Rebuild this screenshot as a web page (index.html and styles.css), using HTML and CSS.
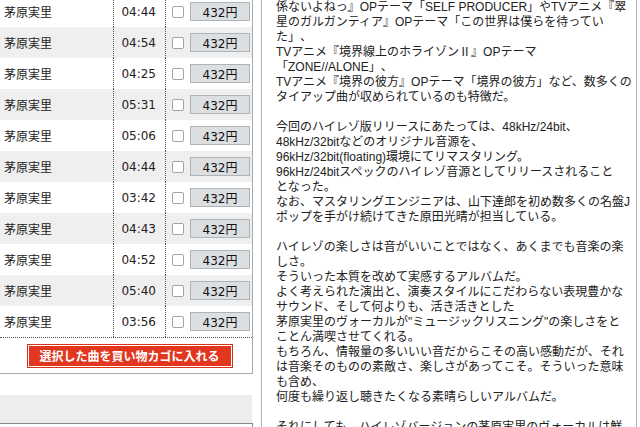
FILE: index.html
```html
<!DOCTYPE html>
<html lang="ja">
<head>
  <meta charset="UTF-8">
  <title>茅原実里 ハイレゾ</title>
  <meta name="viewport" content="width=device-width, initial-scale=1.0">
  <link rel="stylesheet" href="styles.css">
</head>
<body>
  <div class="page">
    <div class="side">
      <div class="tracks">
        <div class="row"><div class="name">茅原実里</div><div class="time">04:44</div><div class="buy"><input type="checkbox"><button class="price">432円</button></div></div>
        <div class="row"><div class="name">茅原実里</div><div class="time">04:54</div><div class="buy"><input type="checkbox"><button class="price">432円</button></div></div>
        <div class="row"><div class="name">茅原実里</div><div class="time">04:25</div><div class="buy"><input type="checkbox"><button class="price">432円</button></div></div>
        <div class="row"><div class="name">茅原実里</div><div class="time">05:31</div><div class="buy"><input type="checkbox"><button class="price">432円</button></div></div>
        <div class="row"><div class="name">茅原実里</div><div class="time">05:06</div><div class="buy"><input type="checkbox"><button class="price">432円</button></div></div>
        <div class="row"><div class="name">茅原実里</div><div class="time">04:44</div><div class="buy"><input type="checkbox"><button class="price">432円</button></div></div>
        <div class="row"><div class="name">茅原実里</div><div class="time">03:42</div><div class="buy"><input type="checkbox"><button class="price">432円</button></div></div>
        <div class="row"><div class="name">茅原実里</div><div class="time">04:43</div><div class="buy"><input type="checkbox"><button class="price">432円</button></div></div>
        <div class="row"><div class="name">茅原実里</div><div class="time">04:52</div><div class="buy"><input type="checkbox"><button class="price">432円</button></div></div>
        <div class="row"><div class="name">茅原実里</div><div class="time">05:40</div><div class="buy"><input type="checkbox"><button class="price">432円</button></div></div>
        <div class="row"><div class="name">茅原実里</div><div class="time">03:56</div><div class="buy"><input type="checkbox"><button class="price">432円</button></div></div>
        <div class="tracks-foot">
          <button class="cart-btn">選択した曲を買い物カゴに入れる</button>
        </div>
      </div>
      <div class="side-box"></div>
      <div class="side-next"></div>
    </div>

    <div class="article">
      <p>係ないよねっ』OPテーマ「SELF PRODUCER」やTVアニメ『翠<br>
      星のガルガンティア』OPテーマ「この世界は僕らを待ってい<br>
      た」、<br>
      TVアニメ『境界線上のホライゾンⅡ』OPテーマ<br>
      「ZONE//ALONE」、<br>
      TVアニメ『境界の彼方』OPテーマ「境界の彼方」など、数多くの<br>
      タイアップ曲が収められているのも特徴だ。</p>
      <p>今回のハイレゾ版リリースにあたっては、48kHz/24bit、<br>
      48kHz/32bitなどのオリジナル音源を、<br>
      96kHz/32bit(floating)環境にてリマスタリング。<br>
      96kHz/24bitスペックのハイレゾ音源としてリリースされること<br>
      となった。<br>
      なお、マスタリングエンジニアは、山下達郎を初め数多くの名盤J<br>
      ポップを手がけ続けてきた原田光晴が担当している。</p>
      <p>ハイレゾの楽しさは音がいいことではなく、あくまでも音楽の楽<br>
      しさ。<br>
      そういった本質を改めて実感するアルバムだ。<br>
      よく考えられた演出と、演奏スタイルにこだわらない表現豊かな<br>
      サウンド、そして何よりも、活き活きとした<br>
      茅原実里のヴォーカルが"ミュージックリスニング"の楽しさをと<br>
      ことん満喫させてくれる。<br>
      もちろん、情報量の多いいい音だからこその高い感動だが、それ<br>
      は音楽そのものの素敵さ、楽しさがあってこそ。そういった意味<br>
      も含め、<br>
      何度も繰り返し聴きたくなる素晴らしいアルバムだ。</p>
      <p>それにしても、ハイレゾバージョンの茅原実里のヴォーカルは鮮</p>
    </div>
  </div>
</body>
</html>
```

FILE: styles.css
```css
body { margin: 0; background: #fff; color: #222; font: 12px "DejaVu Sans", "Noto Sans CJK JP", sans-serif; }
.page { display: flex; gap: 8px; height: 427px; overflow: hidden; }

/* left: track list */
.side { width: 253px; flex: none; }
.tracks { margin-top: -4px; border-right: 1px solid #aaa; border-bottom: 1px solid #aaa; }
.row { display: grid; grid-template-columns: 113px 52px 87px; height: 31px; }
.row:nth-child(even) { background: #efefef; }
.row > div { display: flex; align-items: center; }
.name { padding-left: 4px; }
.time { border-left: 1px dotted #555; justify-content: flex-end; padding-right: 9px; }
.buy { border-left: 1px dotted #555; padding-left: 6px; gap: 6px; }
.buy input { appearance: none; -webkit-appearance: none; width: 12px; height: 12px; margin: 0; border: 1px solid #a4a4a4; border-radius: 2px; background: #fff; }
.price { width: 60px; height: 19px; padding: 0; border: 1px solid #aeb3b7; background: #dcdfe2; color: #111; font: 12px "DejaVu Sans", "Noto Sans CJK JP", sans-serif; }
.tracks-foot { border-top: 1px dotted #555; height: 35px; padding-left: 7px; display: flex; justify-content: center; align-items: center; }
.cart-btn { width: 206px; height: 24px; padding: 0; border: 1px solid #d9321c; box-shadow: inset 0 0 0 1px #fff; background: #e2361f; color: #fff; font: bold 12px "DejaVu Sans", "Noto Sans CJK JP", sans-serif; }
.side-box { margin-top: 21px; height: 28px; width: 252px; background: #ededed; }
.side-next { height: 20px; width: 252px; border-top: 1px solid #888; border-right: 1px solid #888; }

/* right: review text */
.article { width: 376px; flex: none; box-sizing: border-box; border-left: 1px solid #b4b4b4; border-right: 1px solid #b4b4b4; padding: 0 8px 0 14px; line-height: 15px; white-space: nowrap; overflow: hidden; font-family: "Liberation Sans", "Noto Sans CJK JP", sans-serif; text-autospace: no-autospace; text-spacing-trim: space-all; }
.article p { margin: 0 0 15px; }
```
